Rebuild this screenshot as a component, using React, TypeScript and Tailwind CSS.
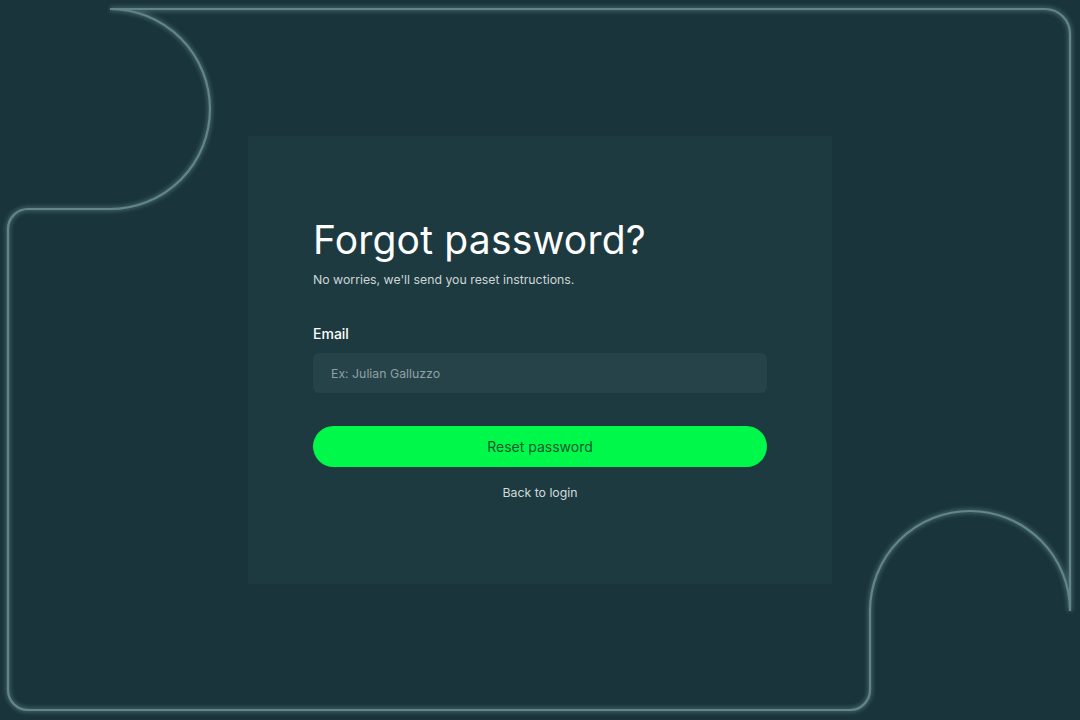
import React from "react";

function Outline() {
  const d =
    "M 110 9 L 1045 9 A 25 25 0 0 1 1070 34 L 1070 611 A 100 100 0 0 0 870 611 L 870 690 A 20 20 0 0 1 850 710 L 28 710 A 20 20 0 0 1 8 690 L 8 229 A 20 20 0 0 1 28 209 L 110 209 A 100 100 0 0 0 110 9 Z";
  return (
    <svg
      className="absolute inset-0 pointer-events-none"
      width="1080"
      height="720"
      viewBox="0 0 1080 720"
    >
      <defs>
        <filter id="glow" x="-10%" y="-10%" width="120%" height="120%">
          <feGaussianBlur stdDeviation="2.2" />
        </filter>
        <filter id="soft" x="-10%" y="-10%" width="120%" height="120%">
          <feGaussianBlur stdDeviation="0.7" />
        </filter>
      </defs>
      <path d={d} fill="none" stroke="#4f7277" strokeWidth="5" filter="url(#glow)" opacity="0.7" />
      <path d={d} fill="none" stroke="#628589" strokeWidth="2.2" filter="url(#soft)" />
    </svg>
  );
}

export default function App() {
  return (
    <div
      className="relative w-[1080px] h-[720px] bg-[#19343a] overflow-hidden flex items-center justify-center"
      style={{ fontFamily: "Inter, 'Noto Sans', sans-serif" }}
    >
      <Outline />
      <div className="relative w-[584px] h-[448px] bg-[#1d3a40] pl-[65px] pt-[82px]">
        <div className="w-[454px] flex flex-col">
          <h1 className="text-[39px] leading-[44px] text-white font-normal tracking-[0.2px]">
            Forgot password?
          </h1>
          <p className="mt-[9px] text-[12.3px] leading-[18px] text-[#cdd6d7]">
            No worries, we'll send you reset instructions.
          </p>
          <label className="mt-[35px] text-[14px] leading-[20px] font-medium text-white">
            Email
          </label>
          <div className="mt-[9px] h-[40px] rounded-[6px] bg-[#27434a] flex items-center pl-[18px] pt-[2px] text-[12.3px] text-[#8fa2a5]">
            Ex: Julian Galluzzo
          </div>
          <button className="mt-[33px] h-[41px] rounded-full bg-[#00f84a] text-[14px] text-[#17592f]">
            Reset password
          </button>
          <div className="mt-[17px] text-center text-[12.3px] leading-[18px] text-[#d2dadb]">
            Back to login
          </div>
        </div>
      </div>
    </div>
  );
}
